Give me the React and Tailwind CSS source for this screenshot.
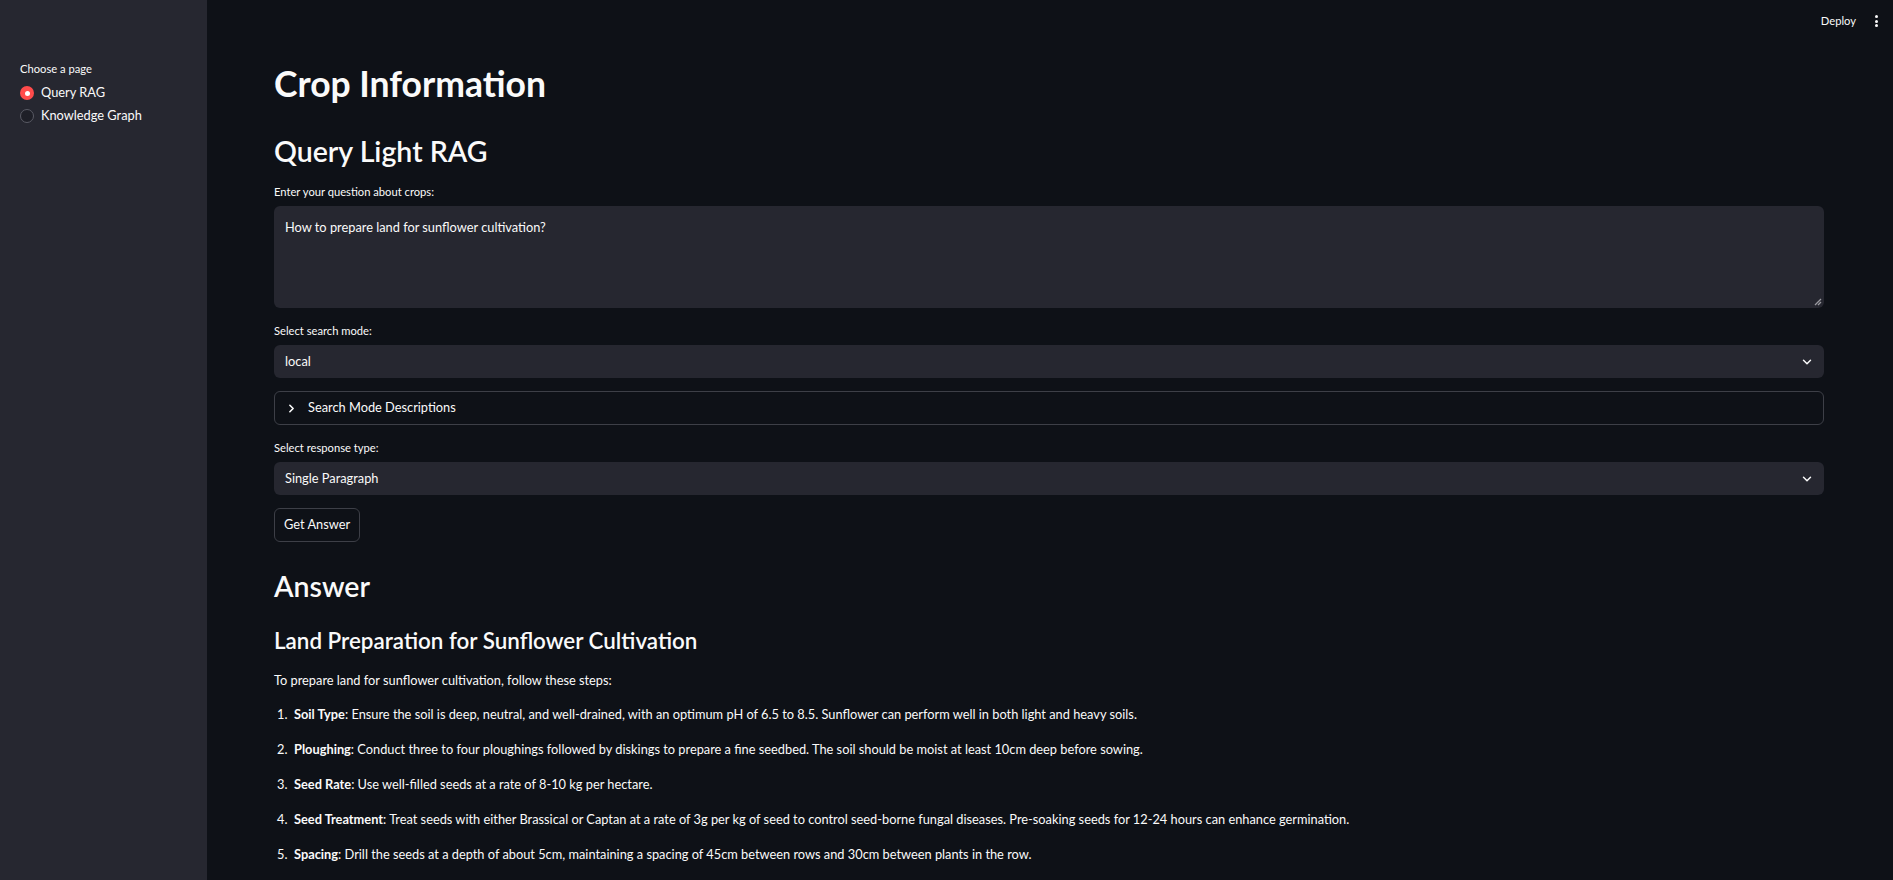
import { ChevronDown, ChevronRight } from 'lucide-react'

const font = { fontFamily: 'Lato, "Noto Sans", sans-serif' }

const steps = [
  ['Soil Type', 'Ensure the soil is deep, neutral, and well-drained, with an optimum pH of 6.5 to 8.5. Sunflower can perform well in both light and heavy soils.'],
  ['Ploughing', 'Conduct three to four ploughings followed by diskings to prepare a fine seedbed. The soil should be moist at least 10cm deep before sowing.'],
  ['Seed Rate', 'Use well-filled seeds at a rate of 8-10 kg per hectare.'],
  ['Seed Treatment', 'Treat seeds with either Brassical or Captan at a rate of 3g per kg of seed to control seed-borne fungal diseases. Pre-soaking seeds for 12-24 hours can enhance germination.'],
  ['Spacing', 'Drill the seeds at a depth of about 5cm, maintaining a spacing of 45cm between rows and 30cm between plants in the row.'],
]

const Label = ({ children }) => (
  <div className="h-[19px] pt-[2px] flex items-center text-[11.2px] text-[#fafafa] mb-[5px]">{children}</div>
)

const Select = ({ value }) => (
  <div className="h-[33px] rounded-[6px] bg-[#262730] flex items-center justify-between pl-[11px] pr-[10px] text-[12.8px] text-[#fafafa]">
    <span>{value}</span>
    <ChevronDown className="w-[14px] h-[14px] text-[#fafafa]" strokeWidth={2.5} />
  </div>
)

const Sidebar = () => (
  <aside className="w-[207px] shrink-0 bg-[#262730] min-h-screen pt-[60px] pl-[20px]">
    <div className="h-[19px] flex items-center text-[11.2px] text-[#fafafa] mb-[7px]">Choose a page</div>
    <div className="flex flex-col gap-[9px] text-[12.8px] text-[#fafafa]">
      <div className="flex items-center gap-[7px] h-[14px]">
        <span className="w-[14px] h-[14px] rounded-full bg-[#ff4b4b] flex items-center justify-center">
          <span className="w-[5px] h-[5px] rounded-full bg-white" />
        </span>
        Query RAG
      </div>
      <div className="flex items-center gap-[7px] h-[14px]">
        <span className="w-[14px] h-[14px] rounded-full border border-[#5a5b65] bg-[#1e1f27]" />
        Knowledge Graph
      </div>
    </div>
  </aside>
)

export default function App() {
  return (
    <div className="flex min-h-screen bg-[#0e1117] text-[#fafafa]" style={font}>
      <Sidebar />
      <main className="relative flex-1 pl-[67px] pr-[69px] pt-[63px] pb-10">
        {/* Top-right toolbar */}
        <div className="absolute top-[13px] right-[15px] flex items-center gap-[19px] text-[11.2px]">
          <span>Deploy</span>
          <span className="flex flex-col gap-[1.5px]">
            <span className="w-[3px] h-[3px] rounded-full bg-[#fafafa]" />
            <span className="w-[3px] h-[3px] rounded-full bg-[#fafafa]" />
            <span className="w-[3px] h-[3px] rounded-full bg-[#fafafa]" />
          </span>
        </div>

        <h1 className="text-[35.5px] leading-[42px] font-bold">Crop Information</h1>
        <h2 className="mt-[29px] text-[28.5px] leading-[35px] font-semibold">Query Light RAG</h2>

        <div className="mt-[13px] flex flex-col gap-[13px]">
          <div>
            <Label>Enter your question about crops:</Label>
            <div className="relative h-[102px] rounded-[6px] bg-[#262730] px-[11px] py-[12px] text-[12.8px] leading-[18px]">
              How to prepare land for sunflower cultivation?
              <svg className="absolute right-[2px] bottom-[2px]" width="8" height="8" viewBox="0 0 8 8">
                <path d="M7 1 L1 7 M7 4 L4 7" stroke="#9a9aa0" strokeWidth="1.3" />
              </svg>
            </div>
          </div>
          <div>
            <Label>Select search mode:</Label>
            <Select value="local" />
          </div>
          <div className="h-[34px] rounded-[6px] border border-[#3d3f47] flex items-center pl-[10px] gap-[10px] text-[12.8px]">
            <ChevronRight className="w-[13px] h-[13px]" strokeWidth={3} />
            <span>Search Mode Descriptions</span>
          </div>
          <div>
            <Label>Select response type:</Label>
            <Select value="Single Paragraph" />
          </div>
          <div>
            <button className="h-[34px] px-[9px] rounded-[6px] border border-[#3d3f47] text-[12.8px] text-[#fafafa]">
              Get Answer
            </button>
          </div>
        </div>

        <h2 className="mt-[27px] text-[28.5px] leading-[35px] font-semibold">Answer</h2>
        <h3 className="mt-[23px] text-[22.4px] leading-[27px] font-semibold">Land Preparation for Sunflower Cultivation</h3>
        <p className="mt-[16px] text-[12.8px] leading-[20px]">To prepare land for sunflower cultivation, follow these steps:</p>
        <ol className="mt-[14px] flex flex-col gap-[15px] text-[12.8px] leading-[20px]">
          {steps.map(([title, text], i) => (
            <li key={title} className="flex">
              <span className="w-[20px] pl-[3px]">{i + 1}.</span>
              <span><strong className="font-bold">{title}</strong>: {text}</span>
            </li>
          ))}
        </ol>
      </main>
    </div>
  )
}
